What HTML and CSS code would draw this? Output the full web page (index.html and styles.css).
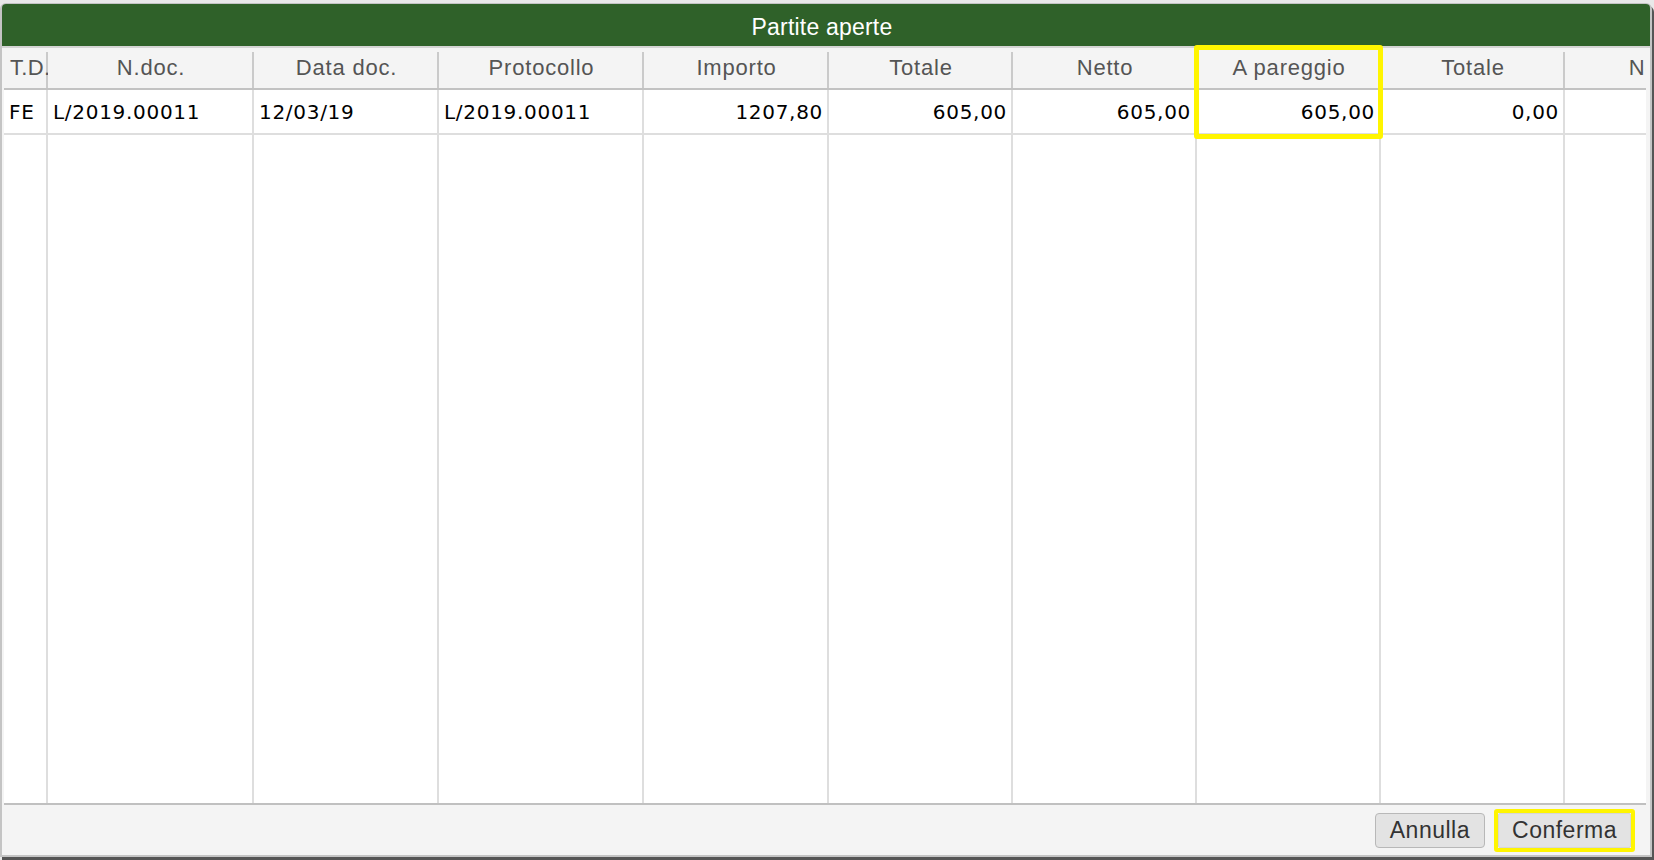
FILE: index.html
```html
<!DOCTYPE html>
<html>
<head>
    <title>Partite aperte</title>
    <link rel="stylesheet" href="styles.css">
</head>
<body>
    <div class="window">
        <div class="title">Partite aperte</div>
        <div class="grid-wrap">
            <div class="grid">
                <!-- header -->
                <div class="th th-left">T.D.</div>
                <div class="th">N.doc.</div>
                <div class="th">Data doc.</div>
                <div class="th">Protocollo</div>
                <div class="th">Importo</div>
                <div class="th">Totale</div>
                <div class="th">Netto</div>
                <div class="th marked">A pareggio</div>
                <div class="th">Totale</div>
                <div class="th">Netto</div>
                <!-- row -->
                <div class="td">FE</div>
                <div class="td">L/2019.00011</div>
                <div class="td">12/03/19</div>
                <div class="td">L/2019.00011</div>
                <div class="td num">1207,80</div>
                <div class="td num">605,00</div>
                <div class="td num">605,00</div>
                <div class="td num">605,00</div>
                <div class="td num">0,00</div>
                <div class="td num"></div>
                <!-- empty space below -->
                <div class="fill"></div>
                <div class="fill"></div>
                <div class="fill"></div>
                <div class="fill"></div>
                <div class="fill"></div>
                <div class="fill"></div>
                <div class="fill"></div>
                <div class="fill"></div>
                <div class="fill"></div>
                <div class="fill"></div>
            </div>
        </div>
        <div class="footer">
            <button class="btn">Annulla</button>
            <span class="mark"><button class="btn">Conferma</button></span>
        </div>
    </div>
</body>
</html>
```
FILE: styles.css
```css
:root {
    --title-green: #2f6129;
    --panel-bg: #f4f4f4;
    --frame-color: #c4c4c4;
    --head-line: #c2c2c2;
    --head-sep: #cacaca;
    --cell-line: #dedede;
    --head-text: #555555;
    --mark-yellow: #fff500;
}

html, body {
    margin: 0;
    height: 860px;
    overflow: hidden;
}

body {
    padding-top: 3px;
    box-sizing: border-box;
    background-color: #e9e9e9;
    font-family: "Liberation Sans", Arial, sans-serif;
}

.window {
    width: 1652px;
    height: 854px;
    box-sizing: border-box;
    border: 2px solid var(--frame-color);
    border-top-width: 1px;
    border-radius: 6px 6px 0 0;
    background-color: var(--panel-bg);
    box-shadow: 2px 3px 0 #555555;
    display: flex;
    flex-direction: column;
}

.title {
    height: 44px;
    box-sizing: border-box;
    padding: 5px 8px 0 0;
    line-height: 37px;
    background-color: var(--title-green);
    border-bottom: 2px solid #d4d4d4;
    border-radius: 4px 4px 0 0;
    color: #ffffff;
    font-size: 23px;
    letter-spacing: 0.2px;
    text-align: center;
}

.grid-wrap {
    height: 757px;
    box-sizing: border-box;
    margin: 0 4px 0 2px;
    border-bottom: 2px solid #c0c0c0;
    background-color: #ffffff;
    overflow-x: clip;
    overflow-y: visible;
}

.grid {
    display: grid;
    grid-template-columns: 44px 206px 185px 205px 185px 184px 184px 184px 184px 184px;
    grid-template-rows: 42px 45px 1fr;
    height: 100%;
}

.th {
    box-sizing: border-box;
    background: var(--panel-bg) linear-gradient(var(--head-sep), var(--head-sep)) no-repeat right bottom / 2px 36px;
    border-bottom: 2px solid var(--head-line);
    color: var(--head-text);
    font-size: 22px;
    letter-spacing: 0.8px;
    line-height: 40px;
    text-align: center;
    white-space: nowrap;
    overflow: hidden;
}

.th-left {
    text-align: left;
    padding-left: 6px;
    letter-spacing: 0.3px;
}

/* yellow frame drawn over the "A pareggio" column */
.th.marked {
    position: relative;
    overflow: visible;
}

.th.marked::after {
    content: "";
    position: absolute;
    left: -3px;
    top: -3px;
    width: 189px;
    height: 94px;
    box-sizing: border-box;
    border: 5px solid var(--mark-yellow);
    border-radius: 3px;
    z-index: 2;
}

.td {
    box-sizing: border-box;
    padding: 2px 5px 0 5px;
    border-right: 2px solid var(--cell-line);
    border-bottom: 2px solid var(--cell-line);
    font-family: "DejaVu Sans", Verdana, sans-serif;
    font-size: 20px;
    letter-spacing: 0.7px;
    line-height: 41px;
    color: #000000;
    white-space: nowrap;
    overflow: hidden;
}

.td.num {
    text-align: right;
    padding-right: 4px;
}

.fill {
    border-right: 2px solid var(--cell-line);
}

.footer {
    height: 50px;
    display: flex;
    align-items: center;
    justify-content: flex-end;
    gap: 9px;
    padding-right: 15px;
}

.btn {
    height: 35px;
    box-sizing: border-box;
    padding: 0 14px;
    background-color: #e3e3e3;
    border: 1px solid #b8b8b8;
    border-radius: 4px;
    color: #333333;
    font-family: "Liberation Sans", Arial, sans-serif;
    font-size: 23px;
    letter-spacing: 0.5px;
    line-height: 33px;
    cursor: pointer;
}

.mark {
    display: flex;
    border: 4px solid var(--mark-yellow);
    border-radius: 3px;
}

.mark .btn {
    border-color: #d6d6d6;
    border-radius: 2px;
    padding: 0 13px;
}
```
